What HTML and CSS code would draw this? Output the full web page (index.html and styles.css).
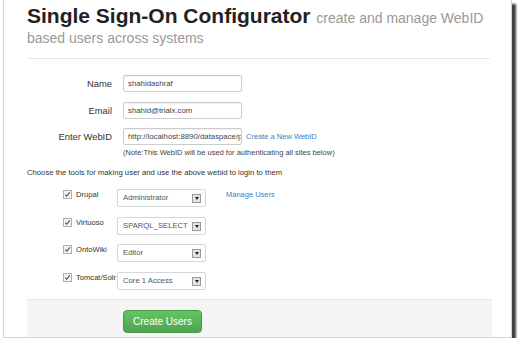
FILE: index.html
```html
<!DOCTYPE html>
<html lang="en">
<head>
    <meta charset="UTF-8" />
    <title>Single Sign-On Configurator</title>
    <link rel="stylesheet" href="styles.css">
</head>
<body>
    <div class="shot">
        <div class="page">
            <h1>Single Sign-On Configurator <small>create and manage WebID based users across systems</small></h1>
            <hr />
            <form class="sso-form">
                <div class="control-group">
                    <label class="control-label">Name</label>
                    <div class="controls"><span class="input">shahidashraf</span></div>
                </div>
                <div class="control-group">
                    <label class="control-label">Email</label>
                    <div class="controls"><span class="input">shahid@trialx.com</span></div>
                </div>
                <div class="control-group webid">
                    <label class="control-label">Enter WebID</label>
                    <div class="controls">
                        <div class="webid-line">
                            <span class="input">http://localhost:8890/dataspace/p</span>
                            <a href="#">Create a New WebID</a>
                        </div>
                        <p class="help">(Note:This WebID will be used for authenticating all sites below)</p>
                    </div>
                </div>

                <p class="choose">Choose the tools for making user and use the above webid to login to them</p>

                <div class="tool-row">
                    <label class="tool"><span class="cb"><svg viewBox="0 0 8 8" width="7" height="7"><path d="M1.5 4.2 L3.2 6 L6.6 1.6" fill="none" stroke="#444" stroke-width="1.2"/></svg></span>Drupal</label>
                    <span class="select">Administrator<span class="arrow"></span></span>
                    <a href="#" class="manage">Manage Users</a>
                </div>
                <div class="tool-row">
                    <label class="tool"><span class="cb"><svg viewBox="0 0 8 8" width="7" height="7"><path d="M1.5 4.2 L3.2 6 L6.6 1.6" fill="none" stroke="#444" stroke-width="1.2"/></svg></span>Virtuoso</label>
                    <span class="select">SPARQL_SELECT<span class="arrow"></span></span>
                </div>
                <div class="tool-row">
                    <label class="tool"><span class="cb"><svg viewBox="0 0 8 8" width="7" height="7"><path d="M1.5 4.2 L3.2 6 L6.6 1.6" fill="none" stroke="#444" stroke-width="1.2"/></svg></span>OntoWiki</label>
                    <span class="select">Editor<span class="arrow"></span></span>
                </div>
                <div class="tool-row last">
                    <label class="tool"><span class="cb"><svg viewBox="0 0 8 8" width="7" height="7"><path d="M1.5 4.2 L3.2 6 L6.6 1.6" fill="none" stroke="#444" stroke-width="1.2"/></svg></span>Tomcat/Solr</label>
                    <span class="select">Core 1 Access<span class="arrow"></span></span>
                </div>

                <div class="form-actions">
                    <button type="button" class="btn-success">Create Users</button>
                </div>
            </form>
        </div>
    </div>
</body>
</html>
```

FILE: styles.css
```css
body {
    margin: 0;
    background: #fff;
    font-family: "Liberation Sans", Arial, sans-serif;
    color: #333;
}
.shot {
    margin-left: 3px;
    width: 507px;
    height: 337px;
    border: 1px solid #d4d4d4;
    border-top: none;
    box-shadow: 4px 4px 2px rgba(0, 0, 0, 0.75);
    overflow: hidden;
}
.page {
    padding: 0 21px 0 23px;
}
h1 {
    margin: 0;
    padding-top: 6px;
    font-size: 21px;
    line-height: 20px;
    font-weight: bold;
    color: #222;
}
h1 small {
    font-size: 14px;
    line-height: 14px;
    font-weight: normal;
    color: #999;
}
hr {
    margin: 12px 0 0;
    border: 0;
    border-top: 1px solid #e8e8e8;
}
.sso-form {
    padding-top: 16px;
    font-size: 7.5px;
    color: #333;
}
.control-group {
    display: flex;
    align-items: flex-start;
    margin-bottom: 9.5px;
}
.control-label {
    width: 85px;
    margin-right: 11px;
    padding-top: 3px;
    text-align: right;
    font-size: 9.4px;
}
.input {
    display: block;
    width: 109px;
    height: 15px;
    line-height: 15px;
    padding: 0 4px;
    border: 1px solid #ccc;
    border-radius: 2px;
    color: #444;
    font-size: 7.8px;
    white-space: nowrap;
    overflow: hidden;
    box-shadow: inset 0 1px 1px rgba(0, 0, 0, 0.06);
}
.webid-line {
    display: flex;
    align-items: center;
    gap: 4px;
}
a {
    color: #3b80c2;
    text-decoration: none;
}
.help {
    margin: 3px 0 0;
    color: #444;
}
.choose {
    margin: 11px 0 12px;
    font-size: 7.7px;
}
.tool-row {
    display: flex;
    align-items: flex-start;
    margin-bottom: 9.7px;
}
.tool-row.last {
    margin-bottom: 9px;
}
.tool {
    display: flex;
    align-items: center;
    width: 54px;
    margin-left: 36px;
    padding-top: 1px;
    font-size: 7.6px;
    white-space: nowrap;
}
.cb {
    display: inline-flex;
    width: 7px;
    height: 7px;
    margin-right: 4px;
    border: 1px solid #b0b0b0;
    background: #f4f4f4;
}
.select {
    position: relative;
    display: block;
    width: 82px;
    height: 16px;
    line-height: 16px;
    padding: 0 0 0 5px;
    border: 1px solid #d6d6d6;
    border-radius: 2px;
    color: #555;
    font-size: 7.7px;
}
.arrow {
    position: absolute;
    right: 4px;
    top: 4px;
    width: 7px;
    height: 7px;
    border: 1px solid #999;
    background: #e4e4e4;
}
.arrow::after {
    content: "";
    position: absolute;
    left: 1.5px;
    top: 2px;
    border-left: 2px solid transparent;
    border-right: 2px solid transparent;
    border-top: 3px solid #222;
}
.manage {
    margin-left: 20px;
    padding-top: 1px;
}
.form-actions {
    height: 40px;
    margin-right: -2px;
    padding: 10px 0 0 96px;
    background: #f5f5f5;
    border-top: 1px solid #e5e5e5;
    box-sizing: border-box;
}
.btn-success {
    width: 79px;
    height: 23px;
    padding: 0;
    border: 1px solid #4a9a4a;
    border-radius: 4px;
    background: linear-gradient(#62c462, #51a351);
    color: #fff;
    font-family: "Liberation Sans", Arial, sans-serif;
    font-size: 10px;
    white-space: nowrap;
}
```
